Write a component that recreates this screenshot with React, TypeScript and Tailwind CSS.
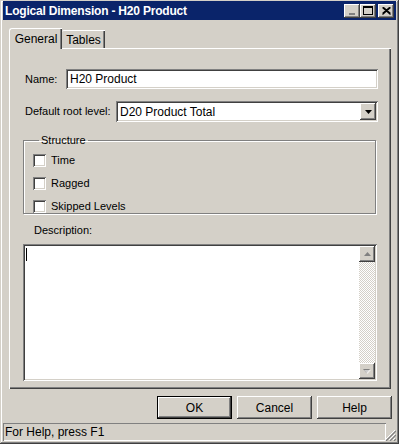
import React from 'react';

const raised =
  'bg-[#d4d0c8] shadow-[inset_-1px_-1px_#404040,inset_1px_1px_#fff,inset_-2px_-2px_#808080,inset_2px_2px_#d4d0c8]';
const sunken =
  'bg-white shadow-[inset_1px_1px_#808080,inset_-1px_-1px_#fff,inset_2px_2px_#404040,inset_-2px_-2px_#d4d0c8]';

const TitleButton: React.FC<{ children: React.ReactNode }> = ({ children }) => (
  <div className={`w-[16px] h-[14px] flex items-center justify-center ${raised}`}>{children}</div>
);

const Checkbox: React.FC<{ label: string }> = ({ label }) => (
  <div className="flex items-center h-[13px] gap-[5px]">
    <div className={`w-[13px] h-[13px] ${sunken}`} />
    <span>{label}</span>
  </div>
);

const Button: React.FC<{ label: string; isDefault?: boolean }> = ({ label, isDefault }) => (
  <div
    className={`w-[75px] h-[23px] flex items-center justify-center ${
      isDefault
        ? 'bg-[#d4d0c8] shadow-[inset_0_0_0_1px_#000,inset_-2px_-2px_#404040,inset_2px_2px_#fff,inset_-3px_-3px_#808080]'
        : raised
    }`}
  >
    {label}
  </div>
);

export default function App() {
  return (
    <div
      className="w-[399px] h-[444px] bg-[#d4d0c8] flex flex-col text-[11px] text-black shadow-[inset_-1px_-1px_#404040,inset_1px_1px_#d4d0c8,inset_-2px_-2px_#808080,inset_2px_2px_#fff]"
      style={{ fontFamily: '"Liberation Sans", Arial, sans-serif' }}
    >
      {/* title bar */}
      <div className="mx-[3px] mt-[1px] h-[19px] bg-[#0a246a] flex items-center pl-[2px] pr-[2px]">
        <span className="flex-1 text-white font-bold text-[12px] tracking-[-0.2px] whitespace-nowrap">Logical Dimension - H20 Product</span>
        <div className="flex items-center">
          <TitleButton>
            <svg width="8" height="8" viewBox="0 0 8 8">
              <rect x="1" y="6" width="6" height="2" fill="#808080" />
            </svg>
          </TitleButton>
          <TitleButton>
            <svg width="10" height="9" viewBox="0 0 10 9">
              <rect x="0.5" y="0.5" width="9" height="8" fill="none" stroke="#000" />
              <rect x="0" y="0" width="10" height="2" fill="#000" />
            </svg>
          </TitleButton>
          <div className="w-[2px]" />
          <TitleButton>
            <svg width="9" height="8" viewBox="0 0 9 8">
              <path d="M0.5 0.5 L8.5 7.5 M1.5 0.5 L8.5 6.5 M8.5 0.5 L0.5 7.5 M7.5 0.5 L0.5 6.5" stroke="#000" strokeWidth="1.2" />
            </svg>
          </TitleButton>
        </div>
      </div>

      {/* tabs */}
      <div className="ml-[9px] mt-[7px] flex items-end h-[21px]">
        <div className="h-[21px] w-[53px] flex items-center justify-center text-[12px] pb-[1px] bg-[#d4d0c8] border-l border-t border-white rounded-tl-[3px] shadow-[inset_-1px_0_#404040,inset_-2px_0_#808080] relative z-10 mb-[-1px]">
          General
        </div>
        <div className="h-[18px] w-[43px] flex items-center justify-center text-[12px] bg-[#d4d0c8] border-t border-white rounded-tl-[2px] shadow-[inset_-1px_0_#404040,inset_-2px_0_#808080]">
          Tables
        </div>
      </div>

      {/* tab panel */}
      <div className="ml-[9px] w-[382px] h-[341px] border-l border-t border-white shadow-[inset_-1px_-1px_#404040,inset_-2px_-2px_#808080] flex flex-col pl-[14px] pr-[13px] text-[11px] whitespace-nowrap">
        <div className="mt-[20px] flex items-center h-[20px]">
          <span className="w-[42px] shrink-0 pl-[1px]">Name:</span>
          <div className={`flex-1 h-[20px] flex items-center pl-[4px] text-[12px] ${sunken}`}>H20 Product</div>
        </div>

        <div className="mt-[12px] flex items-center h-[21px]">
          <span className="w-[92px] shrink-0 pl-[1px]">Default root level:</span>
          <div className={`flex-1 h-[21px] flex items-center pl-[4px] pr-[2px] text-[12px] ${sunken}`}>
            <span className="flex-1">D20 Product Total</span>
            <div className={`w-[16px] h-[17px] flex items-center justify-center ${raised}`}>
              <svg width="7" height="4" viewBox="0 0 7 4">
                <path d="M0 0 H7 L3.5 4 Z" fill="#000" />
              </svg>
            </div>
          </div>
        </div>

        {/* structure group */}
        <fieldset className="mt-[12px] w-[353px] -ml-[1px] border border-[#808080] shadow-[1px_1px_#fff,inset_1px_1px_#fff] pl-[9px] pt-[7px] pb-0 flex flex-col gap-[10px]">
          <legend className="px-[2px] ml-[6px] leading-[13px]">Structure</legend>
          <Checkbox label="Time" />
          <Checkbox label="Ragged" />
          <Checkbox label="Skipped Levels" />
        </fieldset>

        <div className="mt-[9px] pl-[10px] h-[14px] leading-[14px]">Description:</div>

        <div className={`mt-[7px] -ml-[1px] w-[354px] h-[137px] flex p-[2px] ${sunken}`}>
          <div className="flex-1 pl-[1px] pt-[2px]">
            <div className="w-[1px] h-[13px] bg-black" />
          </div>
          <div className="w-[16px] flex flex-col">
            <div className={`h-[16px] flex items-center justify-center ${raised}`}>
              <svg width="7" height="4" viewBox="0 0 7 4">
                <path d="M0 4 H7 L3.5 0 Z" fill="#808080" />
              </svg>
            </div>
            <div className="flex-1 bg-[repeating-conic-gradient(#d4d0c8_0_25%,#fff_0_50%)] bg-[length:2px_2px]" />
            <div className={`h-[16px] flex items-center justify-center ${raised}`}>
              <svg width="8" height="5" viewBox="0 0 8 5">
                <path d="M0 0 H7 L3.5 4 Z" fill="#808080" />
                <path d="M1 1 H8 L4.5 5 Z" fill="#fff" opacity="0.6" />
              </svg>
            </div>
          </div>
        </div>
      </div>

      {/* buttons */}
      <div className="mt-[7px] flex justify-end gap-[5px] pr-[7px] text-[12px]">
        <Button label="OK" isDefault />
        <Button label="Cancel" />
        <Button label="Help" />
      </div>

      {/* status bar */}
      <div className="mt-[4px] ml-[3px] mr-[3px] flex items-end">
        <div className="flex-1 h-[18px] flex items-center pl-[2px] shadow-[inset_1px_1px_#808080,inset_-1px_-1px_#fff] text-[12px]">
          For Help, press F1
        </div>
        <svg width="12" height="12" viewBox="0 0 12 12" className="ml-[-2px]">
          <path d="M11 1 L1 11 M11 5 L5 11 M11 9 L9 11" stroke="#fff" strokeWidth="1" />
          <path d="M12 2 L2 12 M12 6 L6 12 M12 10 L10 12" stroke="#808080" strokeWidth="1.2" />
        </svg>
      </div>
    </div>
  );
}
